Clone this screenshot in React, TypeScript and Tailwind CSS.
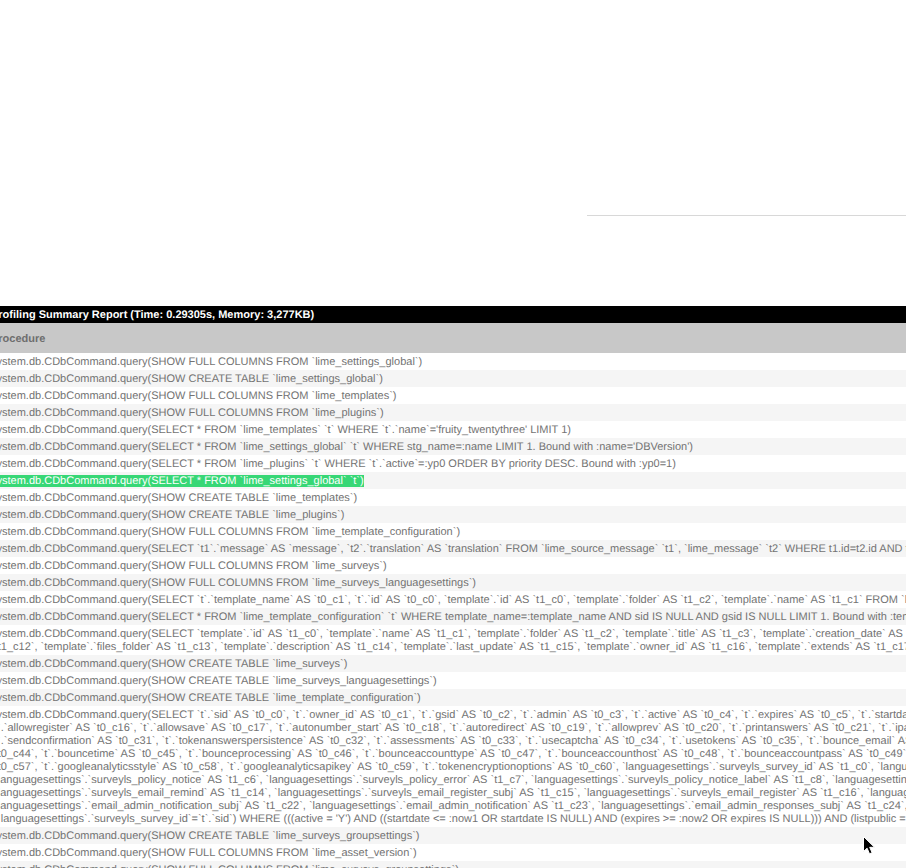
const prefix = 'system.db.CDbCommand.query('

const rows: { lines: string[]; active?: boolean }[] = [
  { lines: [prefix + 'SHOW FULL COLUMNS FROM `lime_settings_global`)'] },
  { lines: [prefix + 'SHOW CREATE TABLE `lime_settings_global`)'] },
  { lines: [prefix + 'SHOW FULL COLUMNS FROM `lime_templates`)'] },
  { lines: [prefix + 'SHOW FULL COLUMNS FROM `lime_plugins`)'] },
  { lines: [prefix + "SELECT * FROM `lime_templates` `t` WHERE `t`.`name`='fruity_twentythree' LIMIT 1)"] },
  { lines: [prefix + "SELECT * FROM `lime_settings_global` `t` WHERE stg_name=:name LIMIT 1. Bound with :name='DBVersion')"] },
  { lines: [prefix + 'SELECT * FROM `lime_plugins` `t` WHERE `t`.`active`=:yp0 ORDER BY priority DESC. Bound with :yp0=1)'] },
  { lines: [prefix + 'SELECT * FROM `lime_settings_global` `t`)'], active: true },
  { lines: [prefix + 'SHOW CREATE TABLE `lime_templates`)'] },
  { lines: [prefix + 'SHOW CREATE TABLE `lime_plugins`)'] },
  { lines: [prefix + 'SHOW FULL COLUMNS FROM `lime_template_configuration`)'] },
  { lines: [prefix + 'SELECT `t1`.`message` AS `message`, `t2`.`translation` AS `translation` FROM `lime_source_message` `t1`, `lime_message` `t2` WHERE t1.id=t2.id AND t1.language=:language'] },
  { lines: [prefix + 'SHOW FULL COLUMNS FROM `lime_surveys`)'] },
  { lines: [prefix + 'SHOW FULL COLUMNS FROM `lime_surveys_languagesettings`)'] },
  { lines: [prefix + 'SELECT `t`.`template_name` AS `t0_c1`, `t`.`id` AS `t0_c0`, `template`.`id` AS `t1_c0`, `template`.`folder` AS `t1_c2`, `template`.`name` AS `t1_c1` FROM `lime_templates` `t`'] },
  { lines: [prefix + "SELECT * FROM `lime_template_configuration` `t` WHERE template_name=:template_name AND sid IS NULL AND gsid IS NULL LIMIT 1. Bound with :template_name='fruity')"] },
  {
    lines: [
      prefix + 'SELECT `template`.`id` AS `t1_c0`, `template`.`name` AS `t1_c1`, `template`.`folder` AS `t1_c2`, `template`.`title` AS `t1_c3`, `template`.`creation_date` AS `t1_c4`,',
      ' `t1_c12`, `template`.`files_folder` AS `t1_c13`, `template`.`description` AS `t1_c14`, `template`.`last_update` AS `t1_c15`, `template`.`owner_id` AS `t1_c16`, `template`.`extends` AS `t1_c17`',
    ],
  },
  { lines: [prefix + 'SHOW CREATE TABLE `lime_surveys`)'] },
  { lines: [prefix + 'SHOW CREATE TABLE `lime_surveys_languagesettings`)'] },
  { lines: [prefix + 'SHOW CREATE TABLE `lime_template_configuration`)'] },
  {
    lines: [
      prefix + 'SELECT `t`.`sid` AS `t0_c0`, `t`.`owner_id` AS `t0_c1`, `t`.`gsid` AS `t0_c2`, `t`.`admin` AS `t0_c3`, `t`.`active` AS `t0_c4`, `t`.`expires` AS `t0_c5`, `t`.`startdate` AS',
      ' t`.`allowregister` AS `t0_c16`, `t`.`allowsave` AS `t0_c17`, `t`.`autonumber_start` AS `t0_c18`, `t`.`autoredirect` AS `t0_c19`, `t`.`allowprev` AS `t0_c20`, `t`.`printanswers` AS `t0_c21`, `t`.`ipaddr`',
      ' t`.`sendconfirmation` AS `t0_c31`, `t`.`tokenanswerspersistence` AS `t0_c32`, `t`.`assessments` AS `t0_c33`, `t`.`usecaptcha` AS `t0_c34`, `t`.`usetokens` AS `t0_c35`, `t`.`bounce_email` AS',
      ' `t0_c44`, `t`.`bouncetime` AS `t0_c45`, `t`.`bounceprocessing` AS `t0_c46`, `t`.`bounceaccounttype` AS `t0_c47`, `t`.`bounceaccounthost` AS `t0_c48`, `t`.`bounceaccountpass` AS `t0_c49`',
      ' `t0_c57`, `t`.`googleanalyticsstyle` AS `t0_c58`, `t`.`googleanalyticsapikey` AS `t0_c59`, `t`.`tokenencryptionoptions` AS `t0_c60`, `languagesettings`.`surveyls_survey_id` AS `t1_c0`, `languagesettings`',
      ' `languagesettings`.`surveyls_policy_notice` AS `t1_c6`, `languagesettings`.`surveyls_policy_error` AS `t1_c7`, `languagesettings`.`surveyls_policy_notice_label` AS `t1_c8`, `languagesettings`',
      ' `languagesettings`.`surveyls_email_remind` AS `t1_c14`, `languagesettings`.`surveyls_email_register_subj` AS `t1_c15`, `languagesettings`.`surveyls_email_register` AS `t1_c16`, `languagesettings`',
      ' `languagesettings`.`email_admin_notification_subj` AS `t1_c22`, `languagesettings`.`email_admin_notification` AS `t1_c23`, `languagesettings`.`email_admin_responses_subj` AS `t1_c24`,',
      "  `languagesettings`.`surveyls_survey_id`=`t`.`sid`) WHERE (((active = 'Y') AND ((startdate <= :now1 OR startdate IS NULL) AND (expires >= :now2 OR expires IS NULL))) AND (listpublic = 'Y'",
    ],
  },
  { lines: [prefix + 'SHOW CREATE TABLE `lime_surveys_groupsettings`)'] },
  { lines: [prefix + 'SHOW FULL COLUMNS FROM `lime_asset_version`)'] },
  { lines: [prefix + 'SHOW FULL COLUMNS FROM `lime_surveys_groupsettings`)'] },
]

export default function App() {
  return (
    <div className="relative h-[868px] overflow-hidden bg-white font-['Liberation_Sans',Arial,sans-serif] text-[11px] leading-[13px] [text-rendering:geometricPrecision]">
      {/* Divider */}
      <div className="pt-[215px] pl-[587px]">
        <div className="h-px bg-[#d8d8d8]" />
      </div>

      {/* Profiling table */}
      <div className="mt-[90px] -ml-[9px] w-[915px] overflow-hidden">
        <div className="bg-black pt-[3px] pb-[1px] font-bold text-white whitespace-nowrap">
          Profiling Summary Report (Time: 0.29305s, Memory: 3,277KB)
        </div>
        <div className="bg-[#c8c8c8] pt-[9.5px] pb-[7.5px] font-bold text-[#6e6e6e]">Procedure</div>
        {rows.map((row, i) => (
          <div key={i} className={`pt-[3px] pb-[1px] text-[#737373] ${i % 2 === 1 ? 'bg-[#f5f5f5]' : 'bg-white'}`}>
            {row.lines.map((line, j) => (
              <div key={j} className="whitespace-pre">
                {row.active ? <span className="bg-[#37d776] text-white">{line}</span> : line}
              </div>
            ))}
          </div>
        ))}
      </div>

      {/* Mouse cursor */}
      <svg className="absolute left-[862px] top-[835px]" width="14" height="20" viewBox="0 0 14 20">
        <path d="M1.5 1.5v15l3.6-3.3 2.4 5.6 2.6-1.1-2.4-5.4h4.8z" fill="#000" stroke="#fff" strokeWidth="1" />
      </svg>
    </div>
  )
}
